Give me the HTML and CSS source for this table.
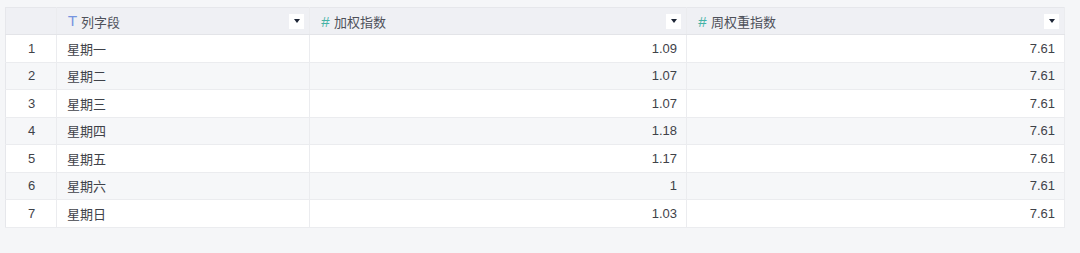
FILE: index.html
```html
<!DOCTYPE html>
<html lang="zh-CN">
<head>
  <meta charset="UTF-8" />
  <title>周权重指数</title>
  <link rel="stylesheet" href="styles.css">
</head>
<body>
  <div class="sheet">
    <table class="grid">
      <colgroup>
        <col class="col-idx">
        <col class="col-name">
        <col class="col-w">
        <col class="col-week">
      </colgroup>
      <thead>
        <tr>
          <th></th>
          <th>
            <div class="head-cell">
              <span class="type-icon text-type">T</span>
              <span class="head-title">列字段</span>
              <span class="drop"><i></i></span>
            </div>
          </th>
          <th>
            <div class="head-cell">
              <span class="type-icon num-type">#</span>
              <span class="head-title">加权指数</span>
              <span class="drop"><i></i></span>
            </div>
          </th>
          <th>
            <div class="head-cell">
              <span class="type-icon num-type">#</span>
              <span class="head-title">周权重指数</span>
              <span class="drop"><i></i></span>
            </div>
          </th>
        </tr>
      </thead>
      <tbody>
        <tr><td class="idx">1</td><td>星期一</td><td class="num">1.09</td><td class="num">7.61</td></tr>
        <tr><td class="idx">2</td><td>星期二</td><td class="num">1.07</td><td class="num">7.61</td></tr>
        <tr><td class="idx">3</td><td>星期三</td><td class="num">1.07</td><td class="num">7.61</td></tr>
        <tr><td class="idx">4</td><td>星期四</td><td class="num">1.18</td><td class="num">7.61</td></tr>
        <tr><td class="idx">5</td><td>星期五</td><td class="num">1.17</td><td class="num">7.61</td></tr>
        <tr><td class="idx">6</td><td>星期六</td><td class="num">1</td><td class="num">7.61</td></tr>
        <tr><td class="idx">7</td><td>星期日</td><td class="num">1.03</td><td class="num">7.61</td></tr>
      </tbody>
    </table>
  </div>
</body>
</html>
```
FILE: styles.css
```css
body {
  margin: 0;
  padding: 0;
  background-color: #f5f6f8;
  font-family: 'Liberation Sans', 'Noto Sans CJK SC', sans-serif;
  color: #3f4249;
}

.sheet {
  padding: 7px 15px 0 5px;
}

.grid {
  width: 1060px;
  border-collapse: collapse;
  table-layout: fixed;
  background: #fff;
  border: 1px solid #e6e7eb;
  font-size: 13px;
}

.col-idx { width: 51px; }
.col-name { width: 253px; }
.col-w { width: 377px; }
.col-week { width: auto; }

.grid th,
.grid td {
  border-right: 1px solid #ebecef;
  border-bottom: 1px solid #ebecef;
  padding: 0 9px 0 10px;
  height: 26.5px;
  white-space: nowrap;
}

.grid th {
  background: #eff0f4;
  font-weight: normal;
  text-align: left;
  height: 26px;
  padding: 0 5px 0 10px;
  border-bottom: 1px solid #e3e4e8;
}

.grid tbody tr:nth-child(even) td {
  background: #f6f7f9;
}

.head-cell {
  display: flex;
  align-items: center;
  gap: 3px;
}

.type-icon {
  width: 11px;
  text-align: center;
}

.text-type {
  font-size: 14px;
  color: #7594e0;
  font-family: 'DejaVu Sans', sans-serif;
}

.num-type {
  font-size: 15px;
  color: #45b3a6;
}

.head-title {
  flex: 1;
  color: #4e515a;
  font-family: 'Noto Sans CJK SC', sans-serif;
}

.drop {
  width: 15px;
  height: 15px;
  background: #fff;
  display: flex;
  align-items: center;
  justify-content: center;
}

.drop i {
  width: 0;
  height: 0;
  border-left: 3.5px solid transparent;
  border-right: 3.5px solid transparent;
  border-top: 4px solid #1d2536;
}

.idx {
  text-align: center;
  padding: 0;
}

.num {
  text-align: right;
}
```
